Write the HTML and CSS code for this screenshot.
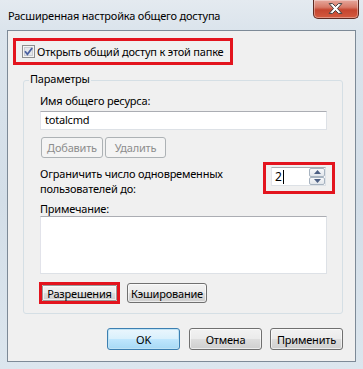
FILE: index.html
```html
<!DOCTYPE html>
<html lang="ru">
<head>
<meta charset="utf-8">
<title>Расширенная настройка общего доступа</title>
<link rel="stylesheet" href="styles.css">
</head>
<body>
<div class="window">
  <div class="titlebar">
    <div class="title">Расширенная настройка общего доступа</div>
    <div class="close">
      <svg width="46" height="19" viewBox="0 0 46 19">
        <path d="M16.5 4.5 L20 4.5 L23 7.5 L26 4.5 L29.5 4.5 L25 9.5 L29.5 14.5 L26 14.5 L23 11.5 L20 14.5 L16.5 14.5 L21 9.5 Z" fill="#ffffff" stroke="#3b3b3b" stroke-width="1" stroke-linejoin="round"/>
      </svg>
    </div>
  </div>
  <div class="client">
    <div class="mark share">
      <span class="checkbox">
        <svg width="13" height="13" viewBox="0 0 13 13">
          <rect x="0.5" y="0.5" width="12" height="12" fill="#f4f4f4" stroke="#8e8f8f"/>
          <rect x="2.5" y="2.5" width="8" height="8" fill="#e3e6ea" stroke="#c9ccd2"/>
          <path d="M3 6.2 L5.4 9.2 L10.2 3" fill="none" stroke="#4b61a0" stroke-width="1.8"/>
        </svg>
      </span>
      <span>Открыть общий доступ к этой папке</span>
    </div>
    <div class="group">
      <span class="legend">Параметры</span>
      <div class="label first">Имя общего ресурса:</div>
      <div class="input name">totalcmd</div>
      <div class="btnrow">
        <span class="btn disabled add">Добавить</span>
        <span class="btn disabled del">Удалить</span>
      </div>
      <div class="limitrow">
        <div class="limit">
          <div class="label">Ограничить число одновременных</div>
          <div class="label">пользователей до:</div>
        </div>
        <div class="mark spinmark">
          <div class="spin">
            <div class="spinval">2<span class="caret"></span></div>
            <div class="arrows">
              <span class="arrow"><svg width="7" height="4" viewBox="0 0 7 4"><path d="M0 4 L3.5 0 L7 4 Z" fill="#4c5f83"/></svg></span>
              <span class="arrow"><svg width="7" height="4" viewBox="0 0 7 4"><path d="M0 0 L3.5 4 L7 0 Z" fill="#4c5f83"/></svg></span>
            </div>
          </div>
        </div>
      </div>
      <div class="label note">Примечание:</div>
      <div class="input area"></div>
      <div class="permrow">
        <div class="mark permmark"><span class="btn perm">Разрешения</span></div>
        <span class="btn cache">Кэширование</span>
      </div>
    </div>
    <div class="footer">
      <span class="btn foot ok">OK</span>
      <span class="btn foot">Отмена</span>
      <span class="btn foot">Применить</span>
    </div>
  </div>
</div>
</body>
</html>
```

FILE: styles.css
```css
* { box-sizing: border-box; }
html, body { margin: 0; padding: 0; }
body {
  width: 363px;
  height: 369px;
  overflow: hidden;
  font-family: "Noto Sans", "Open Sans", sans-serif;
  font-size: 11px;
  letter-spacing: -0.2px;
  color: #000;
  white-space: nowrap;
}
.window {
  width: 363px;
  height: 369px;
  background: linear-gradient(180deg, #e4eaf0 0px, #dbe4ec 30px, #d3dee8 200px, #dce6ee 369px);
  display: flex;
  flex-direction: column;
}
.titlebar {
  height: 30px;
  display: flex;
  align-items: flex-start;
}
.title {
  padding-left: 8px;
  padding-top: 8px;
  line-height: 15px;
  color: #000;
}
.close {
  margin-left: auto;
  margin-right: 4px;
  width: 46px;
  height: 19px;
  border: 1px solid #5e2a22;
  border-top: none;
  border-radius: 0 0 5px 5px;
  background: linear-gradient(180deg, #e6a89d 0%, #d77a68 40%, #c5452f 55%, #d45a3f 100%);
  box-shadow: inset 0 0 0 1px rgba(255,255,255,0.35);
  display: flex;
}
.close svg { display: block; margin: -1px 0 0 -1px; }
.client {
  margin: 0 7px;
  width: 349px;
  height: 332px;
  background: #f0f0f0;
  border: 1px solid #7d8a97;
  display: flex;
  flex-direction: column;
}
.mark {
  border: 3px solid #e3141e;
}
.share {
  margin: 7px 0 0 5px;
  width: 220px;
  height: 27px;
  display: flex;
  align-items: center;
  line-height: 15px;
}
.checkbox {
  width: 13px;
  height: 13px;
  margin-left: 6px;
  margin-right: 2px;
  display: flex;
}
.group {
  margin: 15px 0 0 15px;
  width: 320px;
  height: 234px;
  border: 1px solid #d5dfe5;
  border-radius: 3px;
  padding-left: 16px;
  display: flex;
  flex-direction: column;
  align-items: flex-start;
}
.legend {
  margin: -10px 0 0 -11px;
  padding: 0 1px;
  background: #f0f0f0;
  line-height: 15px;
}
.label {
  line-height: 15px;
}
.first { margin-top: 7px; }
.input {
  width: 287px;
  background: #fff;
  border: 1px solid #dde1e6;
  border-top-color: #abadb3;
  border-left-color: #e2e3ea;
}
.name {
  margin-top: 3px;
  height: 19px;
  padding-left: 4px;
  line-height: 16px;
}
.btnrow {
  margin-top: 7px;
  margin-left: 1px;
  display: flex;
  gap: 2px;
}
.btn {
  display: flex;
  align-items: center;
  justify-content: center;
  border: 1px solid #707070;
  border-radius: 3px;
  background: linear-gradient(180deg, #f2f2f2 0%, #ebebeb 48%, #dddddd 52%, #cfcfcf 100%);
  box-shadow: inset 0 0 0 1px rgba(255,255,255,0.6);
  line-height: 15px;
}
.btn.disabled {
  border-color: #adb2b5;
  background: #f4f4f4;
  color: #8d8d8d;
  box-shadow: none;
}
.add { width: 62px; height: 21px; }
.del { width: 61px; height: 21px; }
.limitrow {
  margin-top: 4px;
  width: 295px;
  display: flex;
  justify-content: space-between;
  align-items: flex-start;
}
.limit { margin-top: 4px; }
.spinmark {
  width: 72px;
  height: 32px;
  padding: 2px 0 0 5px;
}
.spin {
  width: 55px;
  height: 19px;
  display: flex;
  background: #fff;
  border: 1px solid #dde1e6;
  border-top-color: #abadb3;
  border-left-color: #e2e3ea;
}
.spinval {
  width: 38px;
  padding-left: 3px;
  line-height: 17px;
  font-size: 12px;
  display: flex;
  align-items: center;
}
.caret {
  display: inline-block;
  width: 1px;
  height: 14px;
  background: #000;
  margin-left: 1px;
}
.arrows {
  width: 16px;
  display: flex;
  flex-direction: column;
}
.arrow {
  flex: 1;
  display: flex;
  align-items: center;
  justify-content: center;
  border: 1px solid #a7b3c0;
  border-radius: 2px;
  background: linear-gradient(180deg, #f7f8fa, #e2e6eb);
}
.note {
  margin-top: 6px;
  line-height: 14px;
}
.area {
  height: 58px;
}
.permrow {
  margin-top: 8px;
  margin-left: -1px;
  display: flex;
  align-items: flex-start;
  gap: 7px;
}
.permmark {
  width: 81px;
  height: 22px;
  display: flex;
}
.perm {
  flex: 1;
  border-radius: 1px;
  border-color: #9a9a9a;
}
.cache {
  margin-top: 1px;
  width: 80px;
  height: 20px;
}
.footer {
  margin-top: 14px;
  margin-left: 99px;
  display: flex;
  gap: 8px;
}
.foot {
  width: 73px;
  height: 22px;
}
.ok {
  border-color: #3c7fb1;
  box-shadow: inset 0 0 0 1px #bfe3f5;
  background: linear-gradient(180deg, #eaf6fd 0%, #d9f0fc 48%, #bee6fd 52%, #a7d9f5 100%);
  margin-right: 1px;
}
```
